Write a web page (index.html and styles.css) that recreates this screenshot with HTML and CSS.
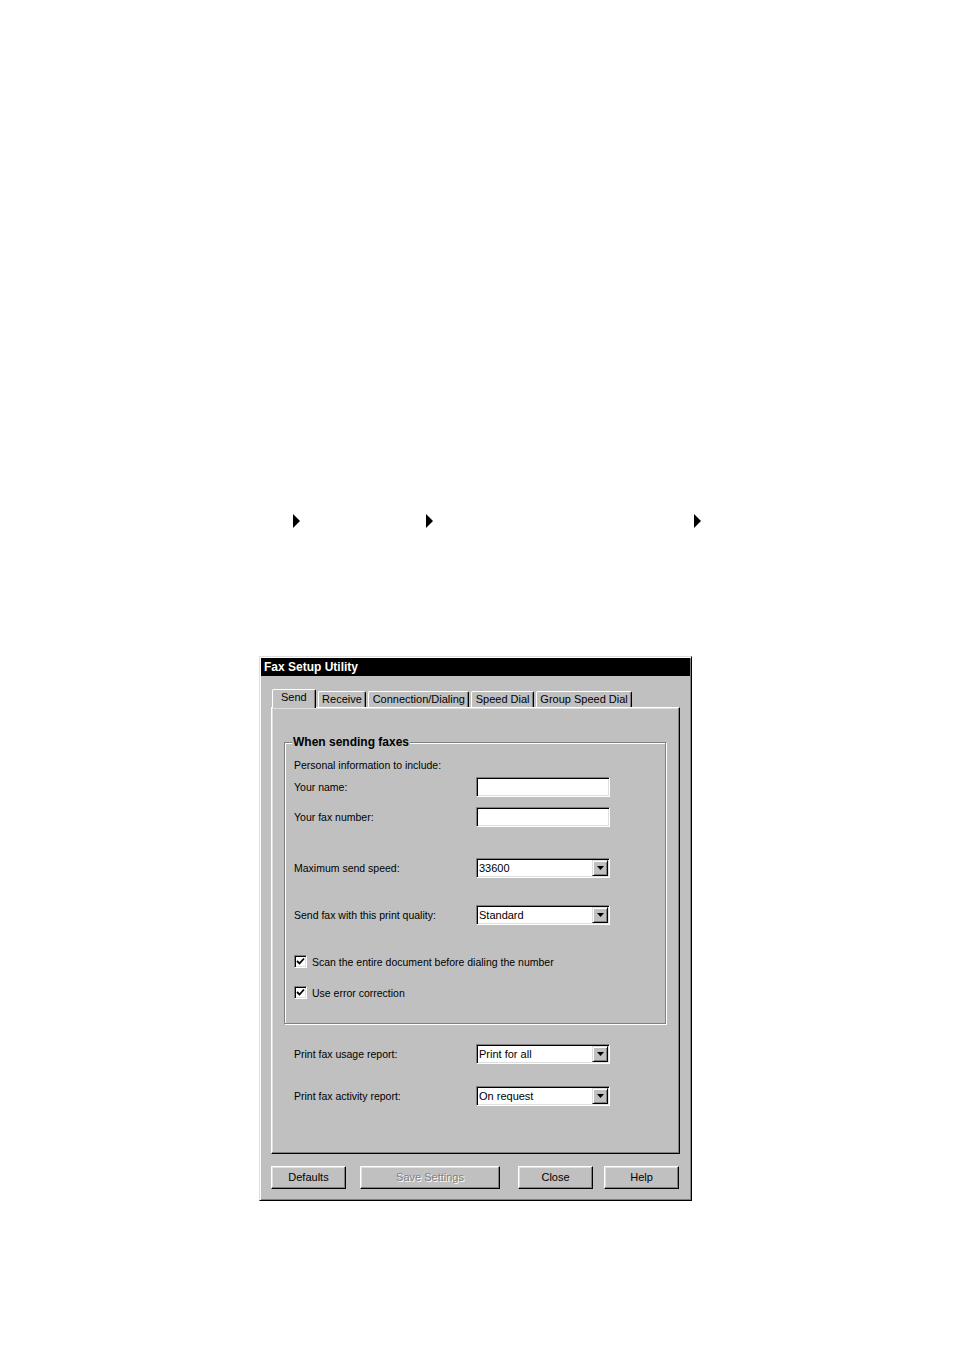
FILE: index.html
```html
<!DOCTYPE html>
<html lang="en">
<head>
<meta charset="utf-8">
<title>Fax Setup Utility</title>
<link rel="stylesheet" href="styles.css">
</head>
<body>
<div class="page">
  <div class="arrows">
    <span class="arrow arrow-1"></span>
    <span class="arrow arrow-2"></span>
    <span class="arrow arrow-3"></span>
  </div>

  <div class="window">
    <div class="titlebar">Fax Setup Utility</div>
    <div class="window-body">
      <div class="tabs">
        <div class="tab active">Send</div>
        <div class="tab">Receive</div>
        <div class="tab">Connection/Dialing</div>
        <div class="tab">Speed Dial</div>
        <div class="tab">Group Speed Dial</div>
      </div>
      <div class="panel">
        <div class="groupbox">
          <span class="legend">When sending faxes</span>
          <div class="text-row">Personal information to include:</div>
          <div class="row mt-5">
            <span class="label">Your name:</span>
            <span class="field"></span>
          </div>
          <div class="row mt-10">
            <span class="label">Your fax number:</span>
            <span class="field"></span>
          </div>
          <div class="row mt-31">
            <span class="label">Maximum send speed:</span>
            <span class="field select"><span class="value">33600</span><span class="drop"><svg width="7" height="4" viewBox="0 0 7 4"><polygon points="0,0 7,0 3.5,4" fill="#000"/></svg></span></span>
          </div>
          <div class="row mt-27">
            <span class="label">Send fax with this print quality:</span>
            <span class="field select"><span class="value">Standard</span><span class="drop"><svg width="7" height="4" viewBox="0 0 7 4"><polygon points="0,0 7,0 3.5,4" fill="#000"/></svg></span></span>
          </div>
          <div class="check-row mt-30">
            <span class="checkbox"><svg width="9" height="9" viewBox="0 0 9 9"><polyline points="1,4 3.5,6.5 8,1.5" fill="none" stroke="#000" stroke-width="1.8"/></svg></span>
            <span>Scan the entire document before dialing the number</span>
          </div>
          <div class="check-row mt-18">
            <span class="checkbox"><svg width="9" height="9" viewBox="0 0 9 9"><polyline points="1,4 3.5,6.5 8,1.5" fill="none" stroke="#000" stroke-width="1.8"/></svg></span>
            <span>Use error correction</span>
          </div>
        </div>
        <div class="extra">
          <div class="row mt-20">
            <span class="label">Print fax usage report:</span>
            <span class="field select"><span class="value">Print for all</span><span class="drop"><svg width="7" height="4" viewBox="0 0 7 4"><polygon points="0,0 7,0 3.5,4" fill="#000"/></svg></span></span>
          </div>
          <div class="row mt-22">
            <span class="label">Print fax activity report:</span>
            <span class="field select"><span class="value">On request</span><span class="drop"><svg width="7" height="4" viewBox="0 0 7 4"><polygon points="0,0 7,0 3.5,4" fill="#000"/></svg></span></span>
          </div>
        </div>
      </div>
      <div class="buttons">
        <span class="button">Defaults</span>
        <span class="button disabled btn-save">Save Settings</span>
        <span class="button btn-close">Close</span>
        <span class="button btn-help">Help</span>
      </div>
    </div>
  </div>
</div>
</body>
</html>
```

FILE: styles.css
```css
* { box-sizing: border-box; }

html, body {
  margin: 0;
  padding: 0;
  background: #fff;
}

body {
  font-family: "Liberation Sans", Arial, sans-serif;
  font-size: 10.5px;
  color: #000;
}

.page {
  width: 954px;
  min-height: 1352px;
}

/* arrow row */
.arrows {
  display: flex;
  padding-top: 514px;
  height: 528px;
}
.arrow {
  width: 0;
  height: 0;
  border-left: 7px solid #000;
  border-top: 7px solid transparent;
  border-bottom: 7px solid transparent;
}
.arrow-1 { margin-left: 293px; }
.arrow-2 { margin-left: 126px; }
.arrow-3 { margin-left: 261px; }

/* window */
.window {
  margin-top: 128px;
  margin-left: 259px;
  width: 433px;
  background: #c0c0c0;
  border: 1px solid;
  border-color: #dfdfdf #000 #000 #dfdfdf;
  box-shadow: inset 1px 1px 0 #fff, inset -1px -1px 0 #808080;
  padding: 1px;
}

.titlebar {
  height: 18px;
  background: #000;
  color: #fff;
  font-weight: bold;
  font-size: 12px;
  line-height: 18px;
  padding-left: 3px;
  white-space: nowrap;
}

.window-body {
  padding: 13px 10px 10px 10px;
}

/* tabs */
.tabs {
  display: flex;
  align-items: flex-end;
  gap: 2px;
  padding-left: 1px;
  height: 18px;
  position: relative;
  z-index: 1;
  font-size: 11px;
}
.tab {
  height: 16px;
  line-height: 14px;
  padding: 0 3.4px;
  border-top: 1px solid #fff;
  border-left: 1px solid #fff;
  border-right: 1px solid #000;
  box-shadow: inset -1px 0 0 #808080;
  border-radius: 2px 2px 0 0;
  background: #c0c0c0;
  white-space: nowrap;
}
.tab.active {
  height: 19px;
  margin-bottom: -1px;
  padding: 0 8px 3px 8px;
  line-height: 14px;
}

/* panel */
.panel {
  height: 447px;
  border: 1px solid;
  border-color: #fff #000 #000 #fff;
  box-shadow: inset -1px -1px 0 #808080, inset 1px 1px 0 #dfdfdf;
  padding: 34px 13px 0 12px;
}

.groupbox {
  position: relative;
  border: 1px solid #808080;
  box-shadow: inset 1px 1px 0 #fff, 1px 1px 0 #fff;
  padding: 15px 0 24px 9px;
}
.legend {
  position: absolute;
  top: -8px;
  left: 7px;
  padding: 0 1px;
  background: #c0c0c0;
  font-weight: bold;
  font-size: 12px;
  line-height: 14px;
}

.text-row {
  height: 14px;
  line-height: 14px;
}

.row {
  display: flex;
  align-items: center;
  height: 20px;
}
.label {
  width: 182px;
  white-space: nowrap;
}

.field {
  width: 134px;
  height: 20px;
  background: #fff;
  border: 1px solid;
  border-color: #808080 #fff #fff #808080;
  box-shadow: inset 1px 1px 0 #000, inset -1px -1px 0 #dfdfdf;
  display: flex;
  align-items: center;
}
.select .value {
  flex: 1;
  padding-left: 2px;
  line-height: 14px;
  font-size: 11px;
}
.drop {
  width: 16px;
  height: 16px;
  margin-right: 1px;
  background: #c0c0c0;
  border: 1px solid;
  border-color: #dfdfdf #000 #000 #dfdfdf;
  box-shadow: inset 1px 1px 0 #fff, inset -1px -1px 0 #808080;
  display: flex;
  align-items: center;
  justify-content: center;
}
.drop svg { display: block; }

.check-row {
  display: flex;
  align-items: center;
  height: 13px;
  gap: 5px;
  white-space: nowrap;
}
.checkbox {
  width: 13px;
  height: 13px;
  background: #fff;
  border: 1px solid;
  border-color: #808080 #fff #fff #808080;
  box-shadow: inset 1px 1px 0 #000, inset -1px -1px 0 #dfdfdf;
  display: flex;
  align-items: center;
  justify-content: center;
}
.checkbox svg { display: block; }

.extra {
  padding-left: 10px;
}

.mt-5 { margin-top: 5px; }
.mt-10 { margin-top: 10px; }
.mt-18 { margin-top: 18px; }
.mt-20 { margin-top: 20px; }
.mt-22 { margin-top: 22px; }
.mt-27 { margin-top: 27px; }
.mt-30 { margin-top: 30px; }
.mt-31 { margin-top: 31px; }

/* buttons */
.buttons {
  display: flex;
  margin-top: 12px;
  font-size: 11px;
}
.button {
  width: 75px;
  height: 23px;
  line-height: 21px;
  text-align: center;
  background: #c0c0c0;
  border: 1px solid;
  border-color: #fff #000 #000 #fff;
  box-shadow: inset -1px -1px 0 #808080, inset 1px 1px 0 #dfdfdf;
  white-space: nowrap;
}
.button.disabled {
  color: #808080;
  text-shadow: 1px 1px 0 #fff;
}
.btn-save { width: 140px; margin-left: 14px; }
.btn-close { margin-left: 18px; }
.btn-help { margin-left: 11px; }
```
